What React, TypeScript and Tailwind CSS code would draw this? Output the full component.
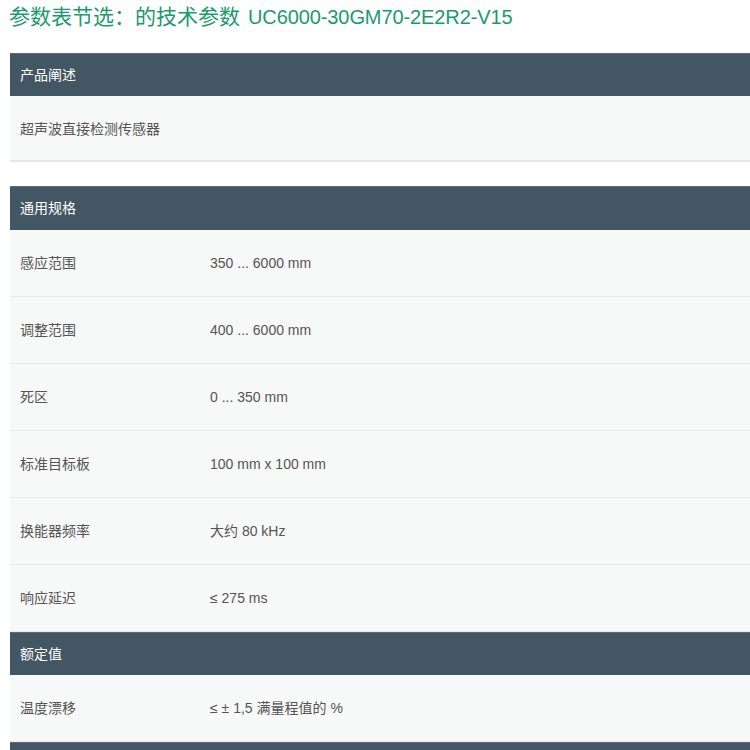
import React from "react";

const F = { fontFamily: '"Liberation Sans", Arial, "Noto Sans CJK SC", sans-serif' };

function Header({ children, tall }: { children: React.ReactNode; tall?: boolean }) {
  return (
    <div
      className={
        (tall ? "h-[44px] " : "h-[43px] ") +
        "bg-[#435663] border-t border-[#5d6e7a] flex items-center px-[10px] text-[14px] text-white"
      }
    >
      {children}
    </div>
  );
}

function Row({ label, value }: { label: string; value?: string }) {
  return (
    <div className="h-[67px] bg-[#f7f8f8] flex items-center px-[10px] text-[14px] text-[#555] border-b border-[#e8e9e9]">
      <div className="w-[190px] shrink-0">{label}</div>
      {value && <div>{value}</div>}
    </div>
  );
}

export default function App() {
  return (
    <div className="w-[750px] h-[750px] overflow-hidden bg-white" style={F}>
      <div className="h-[34px] flex items-center pl-[9px] text-[#1b9a6e] whitespace-nowrap">
        <span className="text-[21px]">参数表节选：的技术参数</span>
        <span className="text-[20px] ml-[8px] tracking-[-0.1px]">UC6000-30GM70-2E2R2-V15</span>
      </div>
      <div className="pl-[10px] pt-[19px]">
        <Header>产品阐述</Header>
        <div className="h-[66px] bg-[#f7f8f8] flex items-center px-[10px] pt-[2px] text-[14px] text-[#555] border-b-2 border-[#e6e7e7]">
          超声波直接检测传感器
        </div>
        <div className="h-[24px]" />
        <Header tall>通用规格</Header>
        <Row label="感应范围" value="350 ... 6000 mm" />
        <Row label="调整范围" value="400 ... 6000 mm" />
        <Row label="死区" value="0 ... 350 mm" />
        <Row label="标准目标板" value="100 mm x 100 mm" />
        <Row label="换能器频率" value="大约 80 kHz" />
        <Row label="响应延迟" value="≤ 275 ms" />
        <Header>额定值</Header>
        <Row label="温度漂移" value="≤ ± 1,5 满量程值的 %" />
        <Header>
          <span />
        </Header>
      </div>
    </div>
  );
}
